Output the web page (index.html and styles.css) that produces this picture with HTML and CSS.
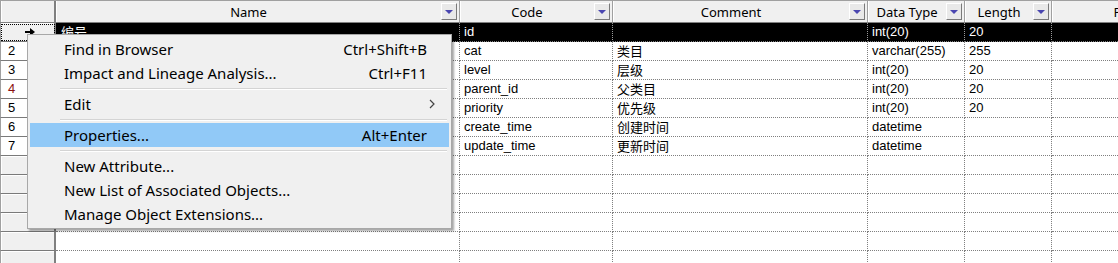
FILE: index.html
```html
<!DOCTYPE html>
<html lang="en">
<head>
  <meta charset="UTF-8">
  <title>Columns</title>
  <link rel="stylesheet" href="styles.css">
</head>
<body>
  <div class="grid">
    <!-- En-tete des colonnes -->
    <div class="row head">
      <div class="corner"></div>
      <div class="th"><span class="label">Name</span><span class="drop"></span></div>
      <div class="th"><span class="label">Code</span><span class="drop"></span></div>
      <div class="th"><span class="label">Comment</span><span class="drop"></span></div>
      <div class="th"><span class="label">Data Type</span><span class="drop"></span></div>
      <div class="th"><span class="label">Length</span><span class="drop"></span></div>
      <div class="th"><span class="label">Primary</span><span class="drop"></span></div>
    </div>

    <div class="row selected">
      <div class="rh current">
        <svg width="10" height="8" viewBox="0 0 10 8"><path d="M0 3h5V0l5 4-5 4V5H0z" fill="#000"/></svg>
      </div>
      <div class="td name">编号</div>
      <div class="td">id</div>
      <div class="td"></div>
      <div class="td">int(20)</div>
      <div class="td">20</div>
      <div class="td"></div>
    </div>

    <div class="row">
      <div class="rh filled">2</div>
      <div class="td"></div>
      <div class="td">cat</div>
      <div class="td cjk">类目</div>
      <div class="td">varchar(255)</div>
      <div class="td">255</div>
      <div class="td"></div>
    </div>
    <div class="row">
      <div class="rh filled">3</div>
      <div class="td"></div>
      <div class="td">level</div>
      <div class="td cjk">层级</div>
      <div class="td">int(20)</div>
      <div class="td">20</div>
      <div class="td"></div>
    </div>
    <div class="row">
      <div class="rh filled red">4</div>
      <div class="td"></div>
      <div class="td">parent_id</div>
      <div class="td cjk">父类目</div>
      <div class="td">int(20)</div>
      <div class="td">20</div>
      <div class="td"></div>
    </div>
    <div class="row">
      <div class="rh filled">5</div>
      <div class="td"></div>
      <div class="td">priority</div>
      <div class="td cjk">优先级</div>
      <div class="td">int(20)</div>
      <div class="td">20</div>
      <div class="td"></div>
    </div>
    <div class="row">
      <div class="rh filled">6</div>
      <div class="td"></div>
      <div class="td">create_time</div>
      <div class="td cjk">创建时间</div>
      <div class="td">datetime</div>
      <div class="td"></div>
      <div class="td"></div>
    </div>
    <div class="row">
      <div class="rh filled">7</div>
      <div class="td"></div>
      <div class="td">update_time</div>
      <div class="td cjk">更新时间</div>
      <div class="td">datetime</div>
      <div class="td"></div>
      <div class="td"></div>
    </div>

    <div class="row"><div class="rh"></div><div class="td"></div><div class="td"></div><div class="td"></div><div class="td"></div><div class="td"></div><div class="td"></div></div>
    <div class="row"><div class="rh"></div><div class="td"></div><div class="td"></div><div class="td"></div><div class="td"></div><div class="td"></div><div class="td"></div></div>
    <div class="row"><div class="rh"></div><div class="td"></div><div class="td"></div><div class="td"></div><div class="td"></div><div class="td"></div><div class="td"></div></div>
    <div class="row"><div class="rh"></div><div class="td"></div><div class="td"></div><div class="td"></div><div class="td"></div><div class="td"></div><div class="td"></div></div>
    <div class="row"><div class="rh"></div><div class="td"></div><div class="td"></div><div class="td"></div><div class="td"></div><div class="td"></div><div class="td"></div></div>
    <div class="row"><div class="rh"></div><div class="td"></div><div class="td"></div><div class="td"></div><div class="td"></div><div class="td"></div><div class="td"></div></div>
  </div>

  <!-- Menu contextuel -->
  <div class="menu">
    <div class="item"><span>Find in Browser</span><span class="key">Ctrl+Shift+B</span></div>
    <div class="item"><span>Impact and Lineage Analysis...</span><span class="key">Ctrl+F11</span></div>
    <div class="sep"></div>
    <div class="item"><span>Edit</span>
      <svg class="sub" width="6" height="10" viewBox="0 0 6 10"><path d="M1 1l4 4-4 4" fill="none" stroke="#444" stroke-width="1.2"/></svg>
    </div>
    <div class="sep"></div>
    <div class="item active"><span>Properties...</span><span class="key">Alt+Enter</span></div>
    <div class="sep"></div>
    <div class="item"><span>New Attribute...</span></div>
    <div class="item"><span>New List of Associated Objects...</span></div>
    <div class="item"><span>Manage Object Extensions...</span></div>
  </div>
</body>
</html>
```

FILE: styles.css
```css
/* Page */
body {
  margin: 0;
  overflow: hidden;
  background: #fff;
  font-family: "Liberation Sans", Arial, sans-serif;
  font-size: 13px;
  color: #000;
}

.grid {
  width: 1242px;
  border-top: 1px solid #a0a0a0;
}

.row {
  display: grid;
  grid-template-columns: 56px 404px 153px 255px 97px 87px 190px;
  height: 19px;
}

/* En-tete */
.row.head {
  height: 21px;
  border-bottom: 1px solid #808080;
  background: #f0f0f0;
}

.corner {
  border-right: 2px solid #808080;
  border-left: 1px solid #a0a0a0;
  box-shadow: inset 1px 0 #fff;
}

.th {
  display: flex;
  align-items: center;
  border-right: 1px solid #a0a0a0;
  box-shadow: inset 1px 0 #fff;
  font-family: "Noto Sans", sans-serif;
  font-size: 13px;
}

.th .label {
  flex: 1;
  text-align: center;
  white-space: nowrap;
}

.drop {
  position: relative;
  width: 14px;
  height: 15px;
  margin-right: 2px;
  background: #e9e9e9;
  border: 1px solid;
  border-color: #fff #7a7a7a #7a7a7a #fff;
}

.drop::after {
  content: "";
  position: absolute;
  left: 3px;
  top: 6px;
  border-left: 4px solid transparent;
  border-right: 4px solid transparent;
  border-top: 4px solid #4a46b0;
}

/* Cellules */
.td {
  box-sizing: border-box;
  border-right: 1px dotted #7f7f7f;
  border-bottom: 1px dotted #7f7f7f;
  padding-left: 4px;
  line-height: 18px;
  white-space: nowrap;
  overflow: hidden;
}

.td.name {
  padding-left: 5px;
}

.cjk,
.td.name {
  font-family: "Noto Sans CJK SC", sans-serif;
  font-size: 13px;
}

.selected .td {
  background: #000;
  color: #fff;
  border-right-color: #9a9a9a;
}

/* Entete des lignes */
.rh {
  box-sizing: border-box;
  background: #f0f0f0;
  border-left: 1px solid #a0a0a0;
  border-right: 2px solid #808080;
  border-bottom: 1px solid #7a7a7a;
  box-shadow: inset 1px 1px #fff;
  padding-left: 7px;
  line-height: 18px;
}

.rh.filled {
  background: #fff;
}

.rh.red {
  color: #8a1010;
}

.rh.current {
  display: flex;
  align-items: center;
  justify-content: center;
  outline: 1px dotted #000;
  outline-offset: -2px;
  padding-left: 4px;
}

/* Menu contextuel */
.menu {
  position: absolute;
  left: 27px;
  top: 34px;
  width: 419px;
  padding: 2px;
  background: #f0f0f0;
  border: 1px solid #a8a8a8;
  box-shadow: 2px 2px 2px rgba(0, 0, 0, 0.35);
  font-family: "Noto Sans", sans-serif;
  font-size: 15px;
  color: #000;
}

.item {
  display: flex;
  align-items: center;
  justify-content: space-between;
  height: 24px;
  padding: 0 22px 0 34px;
}

.item.active {
  background: #91c9f7;
}

.item .sub {
  margin-right: -8px;
}

.sep {
  height: 1px;
  margin: 3px 2px 2px 30px;
  background: #d4d4d4;
  border-bottom: 1px solid #fff;
}
```
